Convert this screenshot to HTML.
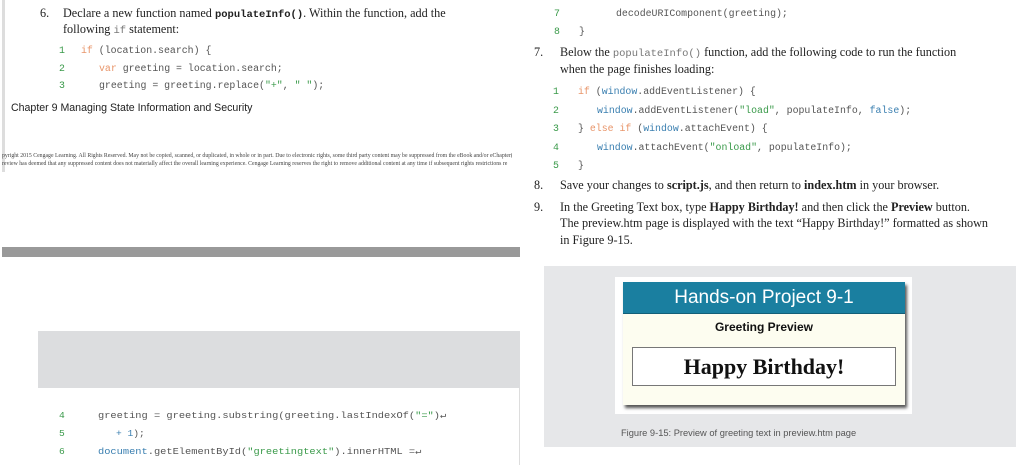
<!DOCTYPE html>
<html><head><meta charset="utf-8"><style>
*{margin:0;padding:0;box-sizing:border-box}
body{width:1024px;height:465px;background:#fff;position:relative;overflow:hidden;font-family:"Liberation Serif",serif;color:#222}
.a{position:absolute;white-space:nowrap}
.s{font-size:12.2px}
.m{font-family:"Liberation Mono",monospace;font-size:9.9px;color:#555}
.n{color:#3a9a4a}
.k{color:#e8956a}
.b{color:#3a7fb0}
.g{color:#3a9a4a}
.cm{font-family:"Liberation Mono",monospace;font-size:10.5px}
</style></head><body>
<div class="a" style="left:2px;top:0;width:3px;height:172px;background:#ddd"></div>
<div class="a s" style="left:40px;top:6px">6.</div>
<div class="a s" style="left:63px;top:6px">Declare a new function named <b class="cm">populateInfo()</b>. Within the function, add the</div>
<div class="a s" style="left:63px;top:22px">following <span class="cm" style="color:#777">if</span> statement:</div>
<div class="a m n" style="left:59px;top:45px">1</div><div class="a m" style="left:81px;top:45px"><span class="k">if</span> (location.search) {</div>
<div class="a m n" style="left:59px;top:63px">2</div><div class="a m" style="left:99px;top:63px"><span class="k">var</span> greeting = location.search;</div>
<div class="a m n" style="left:59px;top:80px">3</div><div class="a m" style="left:99px;top:80px">greeting = greeting.replace(<span class="g">"+"</span>, <span class="g">" "</span>);</div>
<div class="a" style="left:11px;top:102px;font-family:'Liberation Sans',sans-serif;font-size:10.6px;color:#222">Chapter 9 Managing State Information and Security</div>
<div class="a" style="left:2px;top:152px;font-size:5.8px;color:#444;line-height:8px;width:510px;overflow:hidden">pyright 2015 Cengage Learning. All Rights Reserved. May not be copied, scanned, or duplicated, in whole or in part. Due to electronic rights, some third party content may be suppressed from the eBook and/or eChapter(s).<br>review has deemed that any suppressed content does not materially affect the overall learning experience. Cengage Learning reserves the right to remove additional content at any time if subsequent rights restrictions re</div>
<div class="a" style="left:2px;top:247px;width:518px;height:10px;background:#999"></div>
<div class="a" style="left:38px;top:331px;width:482px;height:57px;background:#dcdddf"></div>
<div class="a" style="left:519px;top:388px;width:1px;height:77px;background:#ddd"></div>
<div class="a m n" style="left:59px;top:410px;font-size:9.6px">4</div><div class="a m" style="left:98px;top:410px;font-size:9.6px;transform:scaleX(1.08);transform-origin:left">greeting = greeting.substring(greeting.lastIndexOf(<span class="g">"="</span>)&#8629;</div>
<div class="a m n" style="left:59px;top:428px;font-size:9.6px">5</div><div class="a m" style="left:116px;top:428px;font-size:9.6px"><span class="b">+ 1</span>);</div>
<div class="a m n" style="left:59px;top:446px;font-size:9.6px">6</div><div class="a m" style="left:98px;top:446px;font-size:9.6px;transform:scaleX(1.08);transform-origin:left"><span class="b">document</span>.getElementById(<span class="g">"greetingtext"</span>).innerHTML =&#8629;</div>

<div class="a m n" style="left:554px;top:8px">7</div><div class="a m" style="left:616px;top:8px">decodeURIComponent(greeting);</div>
<div class="a m n" style="left:554px;top:26px">8</div><div class="a m" style="left:579px;top:26px">}</div>
<div class="a s" style="left:534px;top:45px">7.</div>
<div class="a s" style="left:560px;top:45px">Below the <span class="cm" style="color:#777">populateInfo()</span> function, add the following code to run the function</div>
<div class="a s" style="left:560px;top:62px">when the page finishes loading:</div>
<div class="a m n" style="left:553px;top:86px">1</div><div class="a m" style="left:578px;top:86px"><span class="k">if</span> (<span class="b">window</span>.addEventListener) {</div>
<div class="a m n" style="left:553px;top:105px">2</div><div class="a m" style="left:597px;top:105px"><span class="b">window</span>.addEventListener(<span class="g">"load"</span>, populateInfo, <span class="b">false</span>);</div>
<div class="a m n" style="left:553px;top:123px">3</div><div class="a m" style="left:578px;top:123px">} <span class="k">else if</span> (<span class="b">window</span>.attachEvent) {</div>
<div class="a m n" style="left:553px;top:142px">4</div><div class="a m" style="left:597px;top:142px"><span class="b">window</span>.attachEvent(<span class="g">"onload"</span>, populateInfo);</div>
<div class="a m n" style="left:553px;top:160px">5</div><div class="a m" style="left:578px;top:160px">}</div>
<div class="a s" style="left:534px;top:178px">8.</div>
<div class="a s" style="left:560px;top:178px">Save your changes to <b>script.js</b>, and then return to <b>index.htm</b> in your browser.</div>
<div class="a s" style="left:534px;top:200px">9.</div>
<div class="a s" style="left:560px;top:200px">In the Greeting Text box, type <b>Happy Birthday!</b> and then click the <b>Preview</b> button.</div>
<div class="a s" style="left:560px;top:216px">The preview.htm page is displayed with the text “Happy Birthday!” formatted as shown</div>
<div class="a s" style="left:560px;top:233px">in Figure 9-15.</div>

<div class="a" style="left:544px;top:266px;width:472px;height:181px;background:#e6e7e9"></div>
<div class="a" style="left:615px;top:277px;width:297px;height:137px;background:#fff"></div>
<div class="a" style="left:623px;top:282px;width:282px;height:123px;background:#fdfdf0;box-shadow:2px 3px 3px #555"></div>
<div class="a" style="left:623px;top:282px;width:282px;height:32px;background:#1a7fa0;border-bottom:1px solid #135f78;color:#fff;font-family:'Liberation Sans',sans-serif;font-size:19px;text-align:center;line-height:32px">Hands-on Project 9-1</div>
<div class="a" style="left:623px;top:320px;width:282px;text-align:center;font-family:'Liberation Sans',sans-serif;font-size:12px;font-weight:bold;color:#111">Greeting Preview</div>
<div class="a" style="left:632px;top:347px;width:264px;height:39px;background:#fff;border:1px solid #777;text-align:center;font-size:22px;font-weight:bold;line-height:37px;color:#111">Happy Birthday!</div>
<div class="a" style="left:621px;top:428px;font-family:'Liberation Sans',sans-serif;font-size:9.3px;color:#555">Figure 9-15: Preview of greeting text in preview.htm page</div>
</body></html>
